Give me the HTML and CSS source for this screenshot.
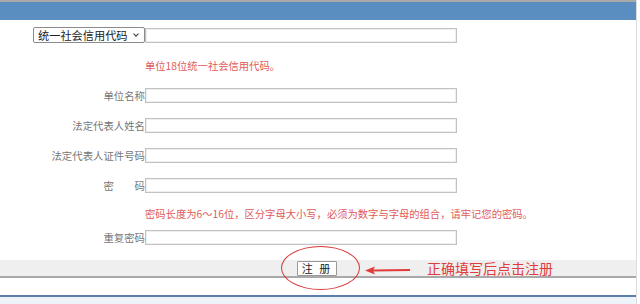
FILE: index.html
```html
<!DOCTYPE html>
<html lang="zh-CN">
<head>
    <meta charset="UTF-8">
    <meta name="viewport" content="width=device-width, initial-scale=1.0">
    <title>单位注册</title>
    <link rel="stylesheet" href="styles.css">
</head>
<body>
    <div class="page">
        <div class="topbar"></div>

        <form class="reg" id="regForm">
            <div class="row row-first">
                <div class="label">
                    <span class="select-wrap">
                        <select id="codeType">
                            <option>统一社会信用代码</option>
                            <option>组织机构代码</option>
                        </select>
                    </span>
                </div>
                <input type="text" id="code">
            </div>
            <div class="row hint">
                <div class="label"></div>
                <span>单位18位统一社会信用代码。</span>
            </div>
            <div class="row">
                <div class="label">单位名称</div>
                <input type="text" id="unitName">
            </div>
            <div class="row">
                <div class="label">法定代表人姓名</div>
                <input type="text" id="legalName">
            </div>
            <div class="row">
                <div class="label">法定代表人证件号码</div>
                <input type="text" id="legalId">
            </div>
            <div class="row">
                <div class="label">密　　码</div>
                <input type="password" id="password">
            </div>
            <div class="row hint hint-pwd">
                <div class="label"></div>
                <span>密码长度为6～16位，区分字母大小写，必须为数字与字母的组合，请牢记您的密码。</span>
            </div>
            <div class="row row-last">
                <div class="label">重复密码</div>
                <input type="password" id="password2">
            </div>
        </form>

        <div class="actions">
            <button type="submit" form="regForm">注 册</button>
            <div class="mark"></div>
            <svg class="arrow" width="48" height="10" viewBox="0 0 48 10">
                <path d="M46 5 L8 5.5" stroke="#e23b3b" stroke-width="2" fill="none"/>
                <path d="M1 5.5 L11 1.5 L9 5.5 L11 9.5 Z" fill="#e23b3b"/>
            </svg>
            <div class="note">正确填写后点击注册</div>
        </div>

        <div class="footer"></div>
    </div>
</body>
</html>
```

FILE: styles.css
```css
body {
    margin: 0;
    background: #fff;
    font-family: "Noto Sans CJK SC", "Noto Sans", sans-serif;
}

.page {
    width: 636px;
    height: 304px;
    border-right: 1px solid #dcdcdc;
    overflow: hidden;
}

.topbar {
    height: 18px;
    border-top: 2px solid #a9a9a9;
    background-color: #5b8ec0;
}

.reg {
    margin: 0;
}

.row {
    display: flex;
    align-items: center;
    height: 30px;
}

.label {
    width: 145px;
    display: flex;
    justify-content: flex-end;
    font-size: 10.4px;
    color: #777;
    white-space: nowrap;
}

.row input {
    width: 312px;
    height: 15px;
    padding: 0 2px;
    margin: 0;
    box-sizing: border-box;
    border: 1px solid #c2c2c2;
    box-shadow: inset 0 0 0 1px #efefef;
    background: #fff;
}

.select-wrap {
    position: relative;
    display: block;
}

.select-wrap::after {
    content: "";
    position: absolute;
    right: 7px;
    top: 5px;
    width: 3px;
    height: 3px;
    border-right: 1.3px solid #333;
    border-bottom: 1.3px solid #333;
    transform: rotate(45deg);
    pointer-events: none;
}

.row-first select {
    display: block;
    appearance: none;
    width: 112px;
    height: 16px;
    margin: 0;
    padding: 0 0 0 4px;
    font-family: "Noto Sans CJK SC", sans-serif;
    font-size: 11.2px;
    line-height: 14px;
    color: #222;
    border: 1px solid #8a8a8a;
    border-radius: 2px;
    background: #fff;
}

.hint span {
    font-size: 10.3px;
    color: #e05a5a;
    white-space: nowrap;
}

.hint-pwd {
    height: 26px;
}

.row-last {
    height: 22px;
}

.actions {
    position: relative;
    margin-top: 12px;
    height: 16px;
    background-color: #efefef;
    border-bottom: 2px solid #a9a9a9;
    display: flex;
    justify-content: center;
    align-items: center;
}

.actions button {
    margin: 0 0 0 -2px;
    padding: 0 4px;
    height: 15px;
    font-family: "Noto Sans CJK SC", sans-serif;
    font-size: 11px;
    line-height: 13px;
    letter-spacing: 2px;
    color: #222;
    background: #fff;
    border: 1px solid #999;
    border-radius: 1px;
    cursor: pointer;
}

.mark {
    position: absolute;
    left: 281px;
    top: -14px;
    width: 77px;
    height: 42px;
    border: 1.5px solid #d93636;
    border-radius: 50%;
}

.arrow {
    position: absolute;
    left: 364px;
    top: 5px;
}

.note {
    position: absolute;
    left: 427px;
    top: -2px;
    font-size: 14px;
    line-height: 20px;
    color: #e23b3b;
    white-space: nowrap;
}

.footer {
    margin-top: 17px;
    height: 30px;
    border-top: 2px solid #5b7fa8;
    background-color: #eef3f9;
}
```
